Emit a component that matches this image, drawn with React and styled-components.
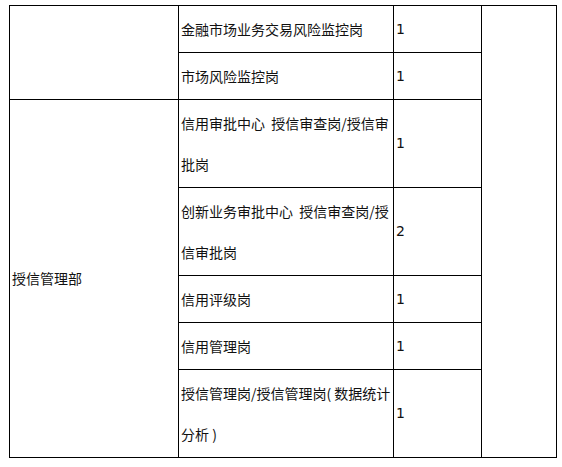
import React from 'react'
import styled, { createGlobalStyle } from 'styled-components'

const Global = createGlobalStyle`
body{
margin:0;
background:white;
}
`

const rows = [
  { job: '金融市场业务交易风险监控岗', count: '1' },
  { job: '市场风险监控岗', count: '1' },
  { job: '信用审批中心  授信审查岗/授信审批岗', count: '1' },
  { job: '创新业务审批中心  授信审查岗/授信审批岗', count: '2' },
  { job: '信用评级岗', count: '1' },
  { job: '信用管理岗', count: '1' },
  { job: '授信管理岗/授信管理岗( 数据统计分析 )', count: '1' },
]

function App(){
return(
<Main>
<Global/>
<Table>
<colgroup>
<Col $w={169}/>
<Col $w={215}/>
<Col $w={88}/>
<Col $w={75}/>
</colgroup>
<tbody>
{rows.map((r,i)=>(
<tr key={i}>
{i===0 && <Cell rowSpan={2}></Cell>}
{i===2 && <Cell rowSpan={5}>授信管理部</Cell>}
<Cell>{r.job}</Cell>
<Cell $num>{r.count}</Cell>
{i===0 && <Cell rowSpan={7}></Cell>}
</tr>
))}
</tbody>
</Table>
</Main>
)
}
export default App

const Main = styled.div`
padding-top:5px;
padding-left:9px;
`
const Table = styled.table`
border-collapse:collapse;
table-layout:fixed;
width:548px;
font-family:"Noto Sans CJK SC",sans-serif;
font-size:14px;
color:#111;
`
const Col = styled.col`
width:${p=>p.$w}px;
`
const Cell = styled.td`
border:1px solid #000;
padding:2.5px 2px;
line-height:41px;
vertical-align:middle;
text-align:left;
word-break:break-all;
white-space:pre-wrap;
font-family:${p=>p.$num ? '"DejaVu Sans",sans-serif' : 'inherit'};
`
